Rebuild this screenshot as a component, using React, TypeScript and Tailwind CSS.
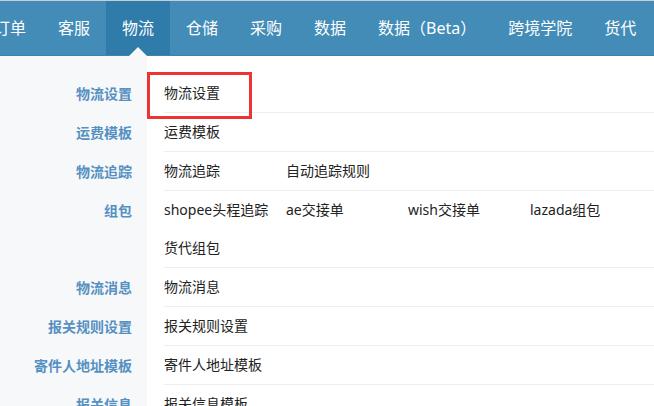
import React from "react";

const navItems = ["订单", "客服", "物流", "仓储", "采购", "数据", "数据（Beta）", "跨境学院", "货代"];

type Row = { label: string; items: string[] };
const rows: Row[] = [
  { label: "物流设置", items: ["物流设置"] },
  { label: "运费模板", items: ["运费模板"] },
  { label: "物流追踪", items: ["物流追踪", "自动追踪规则"] },
  { label: "组包", items: ["shopee头程追踪", "ae交接单", "wish交接单", "lazada组包", "货代组包"] },
  { label: "物流消息", items: ["物流消息"] },
  { label: "报关规则设置", items: ["报关规则设置"] },
  { label: "寄件人地址模板", items: ["寄件人地址模板"] },
  { label: "报关信息", items: ["报关信息模板"] },
];

export default function App() {
  return (
    <div
      className="w-[654px] h-[406px] overflow-hidden bg-white flex flex-col"
      style={{ fontFamily: '"Noto Sans", "Noto Sans CJK SC", sans-serif' }}
    >
      <div className="h-[1px] bg-[#c9cdd1] shrink-0" />
      <div className="h-[55px] shrink-0 bg-[#438cb8] flex border-b border-[#3f82ad]">
        <div className="flex ml-[-22px]">
          {navItems.map((n) => {
            const active = n === "物流";
            return (
              <div
                key={n}
                className={`relative px-4 flex items-center text-white text-[16px] whitespace-nowrap ${
                  active ? "bg-[#2f7ba9]" : ""
                }`}
              >
                {n}
                {active && (
                  <div className="absolute left-[23px] bottom-[-1px] w-0 h-0 border-l-[9px] border-r-[9px] border-b-[9px] border-l-transparent border-r-transparent border-b-[#f7f8fa]" />
                )}
              </div>
            );
          })}
        </div>
      </div>
      <div className="flex-1 flex relative">
        <div className="w-[147px] shrink-0 bg-[#f7f8fa]" />
        <div className="flex-1" />
        <div className="absolute inset-0 pt-[18px] flex flex-col">
          {rows.map((r) => (
            <div key={r.label} className="flex">
              <div className="w-[147px] shrink-0 pr-[15px] text-right text-[14px] font-bold text-[#5590c2] h-[39px] leading-[39px] whitespace-nowrap">
                {r.label}
              </div>
              <div className="ml-[17px] flex-1 flex flex-wrap border-b border-[#eeeeee] text-[14px] text-[#222]">
                {r.items.map((it) => (
                  <div key={it} className="w-[122px] h-[38px] leading-[38px] whitespace-nowrap">
                    {it}
                  </div>
                ))}
              </div>
            </div>
          ))}
        </div>
        <div className="absolute left-[147px] top-[16px] w-[105px] h-[47px] border-[3px] border-[#ee3333]" />
      </div>
    </div>
  );
}
